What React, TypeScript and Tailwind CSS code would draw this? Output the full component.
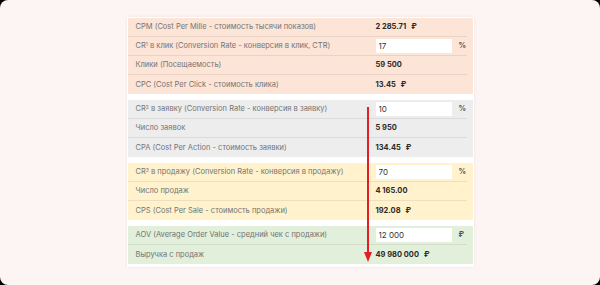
type Row = {
  label: React.ReactNode;
  value: string;
  input?: boolean;
  unit?: string;
};

type Section = { bg: string; rows: Row[] };

const sections: Section[] = [
  {
    bg: "bg-[#fce4d6]",
    rows: [
      { label: "CPM (Cost Per Mille - стоимость тысячи показов)", value: "2 285.71", unit: "₽" },
      {
        label: (
          <>
            CR<sup className="text-[5px]">1</sup> в клик (Conversion Rate - конверсия в клик, CTR)
          </>
        ),
        value: "17",
        input: true,
        unit: "%",
      },
      { label: "Клики (Посещаемость)", value: "59 500" },
      { label: "CPC (Cost Per Click - стоимость клика)", value: "13.45", unit: "₽" },
    ],
  },
  {
    bg: "bg-[#ededed]",
    rows: [
      {
        label: (
          <>
            CR<sup className="text-[5px]">2</sup> в заявку (Conversion Rate - конверсия в заявку)
          </>
        ),
        value: "10",
        input: true,
        unit: "%",
      },
      { label: "Число заявок", value: "5 950" },
      { label: "CPA (Cost Per Action - стоимость заявки)", value: "134.45", unit: "₽" },
    ],
  },
  {
    bg: "bg-[#fff2cc]",
    rows: [
      {
        label: (
          <>
            CR<sup className="text-[5px]">3</sup> в продажу (Conversion Rate - конверсия в продажу)
          </>
        ),
        value: "70",
        input: true,
        unit: "%",
      },
      { label: "Число продаж", value: "4 165.00" },
      { label: "CPS (Cost Per Sale - стоимость продажи)", value: "192.08", unit: "₽" },
    ],
  },
  {
    bg: "bg-[#e2efda]",
    rows: [
      {
        label: "AOV (Average Order Value - средний чек с продажи)",
        value: "12 000",
        input: true,
        unit: "₽",
      },
      { label: "Выручка с продаж", value: "49 980 000", unit: "₽" },
    ],
  },
];

function CalcRow({ row, last }: { row: Row; last: boolean }) {
  return (
    <div
      className={`flex h-[19px] items-center pl-[8px] ${
        last ? "" : "border-b border-[#00000012]"
      }`}
    >
      <div className="w-[240px] text-[#747474]">{row.label}</div>
      {row.input ? (
        <div className="flex items-center">
          <input
            readOnly
            value={row.value}
            className="h-[14px] w-[76px] bg-white px-[3px] text-[8px] text-[#333] outline-none"
          />
          <span className="ml-[7px] font-bold text-[#555]">{row.unit}</span>
        </div>
      ) : (
        <div className="font-bold text-[#2a2a2a]">
          {row.value}
          {row.unit && <span className="ml-[5px]">{row.unit}</span>}
        </div>
      )}
    </div>
  );
}

export default function App() {
  return (
    <div className="h-[285px] w-[600px] bg-black">
      <div
        className="flex h-[285px] w-[600px] justify-center rounded-[8px] bg-[#fdf4f4] pt-[17px]"
        style={{ fontFamily: "Inter, 'Open Sans', sans-serif" }}
      >
        <div className="relative flex h-[250px] w-[347px] flex-col gap-[6px] bg-white p-[1px] text-[7.5px] shadow-[0_0_3px_rgba(0,0,0,0.08)]">
          {sections.map((s, i) => (
            <div key={i} className={`${s.bg} pr-[6px]`}>
              {s.rows.map((r, j) => (
                <CalcRow key={j} row={r} last={j === s.rows.length - 1} />
              ))}
            </div>
          ))}
          <svg
            className="absolute left-[236px] top-[90px]"
            width="10"
            height="156"
            viewBox="0 0 10 156"
          >
            <line x1="5" y1="0" x2="5" y2="146" stroke="#e31e24" strokeWidth="2" />
            <polygon points="1,145 9,145 5,155" fill="#e31e24" />
          </svg>
        </div>
      </div>
    </div>
  );
}
